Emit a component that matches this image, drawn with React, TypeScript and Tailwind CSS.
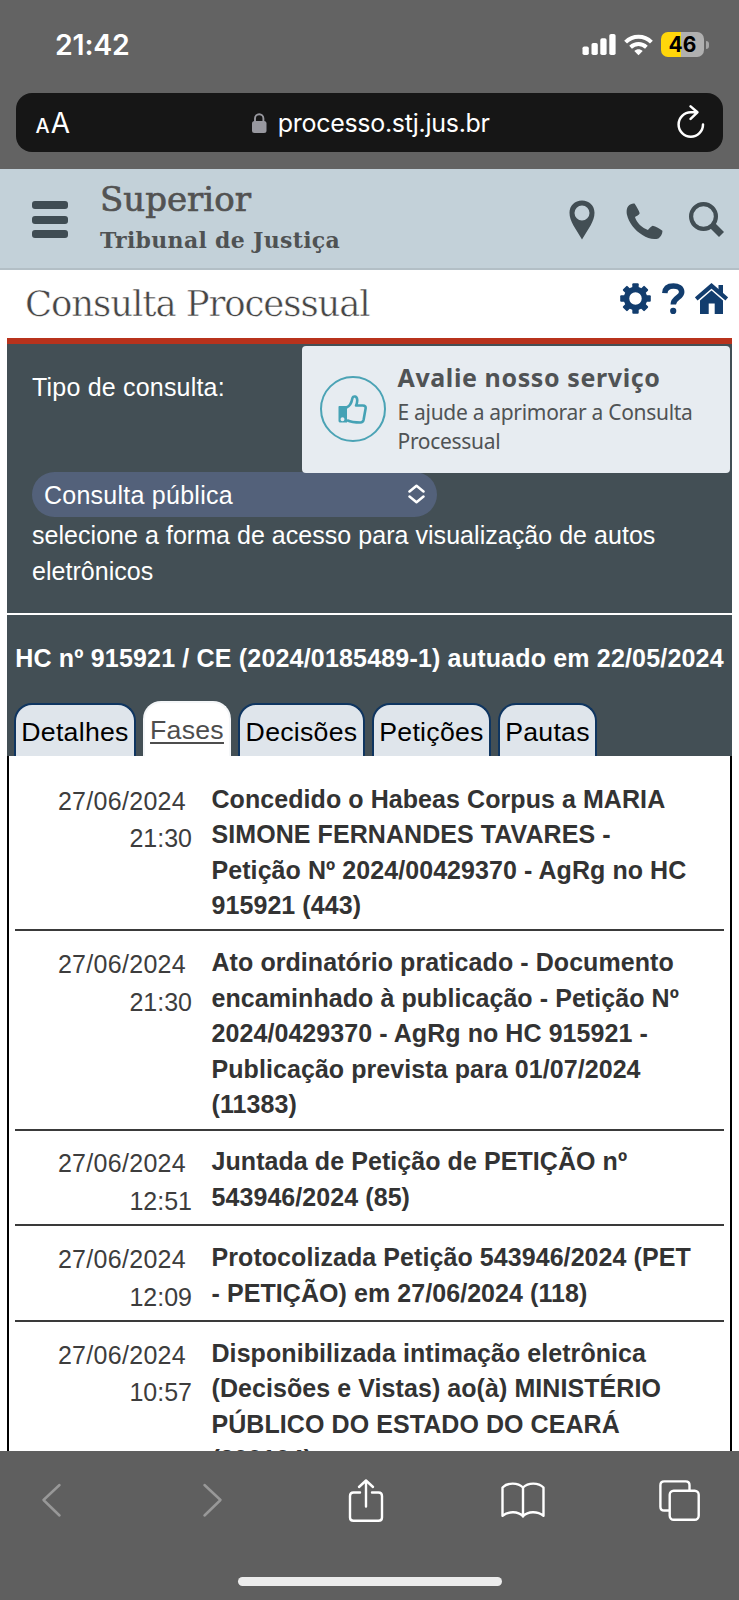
import clsx from "clsx";

interface Fase {
   date: string;
   time: string;
   lines: string[];
}

const tabs = [
   { label: "Detalhes", size: "w-[122px]" },
   { label: "Fases", size: "w-[88px]", active: true },
   { label: "Decisões", size: "w-[127px]" },
   { label: "Petições", size: "w-[119px]" },
   { label: "Pautas", size: "w-[99px]" },
];

const fases: Fase[] = [
   {
      date: "27/06/2024",
      time: "21:30",
      lines: [
         "Concedido o Habeas Corpus a MARIA",
         "SIMONE FERNANDES TAVARES -",
         "Petição Nº 2024/00429370 - AgRg no HC",
         "915921 (443)",
      ],
   },
   {
      date: "27/06/2024",
      time: "21:30",
      lines: [
         "Ato ordinatório praticado - Documento",
         "encaminhado à publicação - Petição Nº",
         "2024/0429370 - AgRg no HC 915921 -",
         "Publicação prevista para 01/07/2024",
         "(11383)",
      ],
   },
   {
      date: "27/06/2024",
      time: "12:51",
      lines: ["Juntada de Petição de PETIÇÃO nº", "543946/2024 (85)"],
   },
   {
      date: "27/06/2024",
      time: "12:09",
      lines: [
         "Protocolizada Petição 543946/2024 (PET",
         "- PETIÇÃO) em 27/06/2024 (118)",
      ],
   },
   {
      date: "27/06/2024",
      time: "10:57",
      lines: [
         "Disponibilizada intimação eletrônica",
         "(Decisões e Vistas) ao(à) MINISTÉRIO",
         "PÚBLICO DO ESTADO DO CEARÁ",
         "(300104)",
      ],
   },
];

const StatusBar = () => (
   <div className="flex h-[93px] items-start justify-between pl-[55px] pr-[30px] pt-[29px]">
      <span className="text-[28.5px] font-semibold leading-[32px] tracking-[-0.2px]">
         21:42
      </span>
      <div className="flex items-center pt-[3px]">
         <svg width="34" height="21" viewBox="0 0 34 21" fill="white">
            <rect x="0.5" y="12.5" width="6.3" height="8.5" rx="1.8" />
            <rect x="9.5" y="9" width="6.3" height="12" rx="1.8" />
            <rect x="18.3" y="4.3" width="6.3" height="16.7" rx="1.8" />
            <rect x="27.3" y="0" width="6.3" height="21" rx="1.8" />
         </svg>
         <svg
            className="ml-[8px]"
            width="29"
            height="22"
            viewBox="0 0 29 22"
            fill="none"
            stroke="white"
            strokeWidth="4"
         >
            <path d="M1.6 8.2C8.8 1 20.2 1 27.4 8.2" />
            <path d="M6.6 13.2c4.6-4.2 11.2-4.2 15.8 0" />
            <path
               d="M10.3 17c2.6-2.2 5.8-2.2 8.4 0l-4.2 4.3z"
               fill="white"
               stroke="none"
            />
         </svg>
         <div className="ml-[8px] flex h-[25px] w-[43px] items-center justify-center rounded-[7px] bg-[linear-gradient(90deg,#ffd60a_46%,#b0b0b0_46%)]">
            <span className="text-[21px] font-bold leading-none text-black">
               46
            </span>
         </div>
         <span className="ml-[2px] h-[8px] w-[3px] rounded-r-full bg-[#a5a5a5]" />
      </div>
   </div>
);

const AddressBar = () => (
   <div className="mx-[16px] flex h-[59px] items-center justify-between rounded-[16px] bg-[#161616] pl-[19.5px] pr-[17px]">
      <div className="flex w-[60px] items-baseline pt-[1px] leading-none">
         <span className="text-[20px] font-medium">A</span>
         <span className="ml-[1px] text-[28px]">A</span>
      </div>
      <div className="flex items-center">
         <svg width="15" height="20" viewBox="0 0 15 20">
            <rect y="8" width="14.5" height="12" rx="2.5" fill="#98989f" />
            <path
               d="M3 9V5.5a4.2 4.2 0 0 1 8.4 0V9"
               fill="none"
               stroke="#98989f"
               strokeWidth="1.9"
            />
         </svg>
         <span className="ml-[11px] text-[25px] leading-[30px] tracking-[-0.3px]">
            processo.stj.jus.br
         </span>
      </div>
      <div className="flex w-[60px] justify-end pb-[2px]">
         <svg
            width="30"
            height="34"
            viewBox="0 0 30 34"
            fill="none"
            stroke="white"
            strokeWidth="2.5"
            strokeLinecap="round"
            strokeLinejoin="round"
         >
            <path d="M27 19.5A12.2 12.2 0 1 1 14.8 7.3h6.4M14.6 1.4l6.8 5.9-6.8 6.6" />
         </svg>
      </div>
   </div>
);

const SiteHeader = () => (
   <header className="flex h-[101px] items-start border-b-2 border-[#b3bfc6] bg-[#c3d1d9] pl-[32px] text-[#4a5358]">
      <div className="mt-[32px] flex w-[36px] flex-col gap-[6.5px]">
         <span className="h-[8px] rounded-[3px] bg-[#3f4c53]" />
         <span className="h-[8px] rounded-[3px] bg-[#3f4c53]" />
         <span className="h-[8px] rounded-[3px] bg-[#3f4c53]" />
      </div>
      <div className="ml-[32px] w-[300px] whitespace-nowrap font-['DejaVu_Serif',serif]">
         <p className="mt-[10px] text-[34px] leading-[40px] text-[#525252] [-webkit-text-stroke:0.7px_#525252]">
            Superior
         </p>
         <p className="mt-[5px] text-[22px] font-bold leading-[32px] tracking-[0.3px] text-[#4f5253]">
            Tribunal de Justiça
         </p>
      </div>
      <svg
         className="ml-[169px] mt-[31px]"
         width="26"
         height="40"
         viewBox="0 0 26 40"
         fill="#424e54"
      >
         <path
            fillRule="evenodd"
            d="M13 .5C5.8.5.5 5.6.5 12.7c0 4.3 1.5 8 3.8 12.5L13 39.5l8.7-14.3c2.3-4.5 3.8-8.2 3.8-12.5C25.5 5.6 20.2.5 13 .5zm0 5a7.5 7.5 0 1 1 0 15 7.5 7.5 0 0 1 0-15z"
         />
      </svg>
      <svg
         className="ml-[31px] mt-[34px]"
         width="38"
         height="37"
         viewBox="0 0 38 37"
         fill="#424e54"
      >
         <path d="M2 3.5C4 1 6.5.3 8.5.6c1.8 2.6 4.6 7.2 5.2 9.7-.6 1.5-3.3 3.1-4.7 3.8 1.2 5.5 7.5 11.3 12.9 12.8 1.4-1.2 3.1-3.7 4.8-4.2 3 .8 7.3 3.1 9.7 5.1.3 2.5-1.5 6.3-4 7.6-5.1 1.8-10.7-.2-16-3.5C8.5 27.2 2.8 19.7.9 11.5.3 8.4.7 5.3 2 3.5z" />
      </svg>
      <svg
         className="ml-[24px] mt-[33px]"
         width="38"
         height="37"
         viewBox="0 0 38 37"
         fill="none"
         stroke="#424e54"
      >
         <circle cx="15.5" cy="14.5" r="12.4" strokeWidth="4.2" />
         <path d="M23.5 22.5l10 10" strokeWidth="7" />
      </svg>
   </header>
);

const TitleBar = () => (
   <div className="flex h-[68px] items-start justify-between bg-white pl-[25px] pr-[11px] text-[#123d6e]">
      <h1 className="mt-[11px] whitespace-nowrap font-['DejaVu_Serif',serif] text-[35.5px] leading-[46px] tracking-[-1.1px] text-[#464646] [-webkit-text-stroke:0.5px_white]">
         Consulta Processual
      </h1>
      <div className="mt-[12.5px] flex">
         <svg width="31" height="31" viewBox="-15.5 -15.5 31 31">
            <circle r="9" fill="none" stroke="currentColor" strokeWidth="5.5" />
            {[0, 45, 90, 135, 180, 225, 270, 315].map((angle) => (
               <rect
                  key={angle}
                  x="-3.2"
                  y="-15.3"
                  width="6.4"
                  height="6"
                  rx="1"
                  fill="currentColor"
                  transform={`rotate(${angle})`}
               />
            ))}
         </svg>
         <svg
            className="ml-[11px]"
            width="23"
            height="31"
            viewBox="0 0 23 31"
            fill="none"
            stroke="currentColor"
            strokeWidth="5.5"
         >
            <path d="M2.8 10.2C3 5 6.3 2.9 11.5 2.9c4.7 0 8.2 2.1 8.2 6.2 0 5.7-8.4 5.4-8.4 12.4" />
            <circle cx="11.2" cy="27.9" r="3.1" fill="currentColor" stroke="none" />
         </svg>
         <svg className="ml-[10px]" width="33" height="31" viewBox="0 0 33 31">
            <path
               d="M1.2 16L16.5 2.8 31.8 16"
               fill="none"
               stroke="currentColor"
               strokeWidth="4.2"
            />
            <path
               d="M23.5 2H28v9l-4.5-4zM16.5 7.5L28 17.5V31h-8.3V20.500h-6V31H5V17.5z"
               fill="currentColor"
            />
         </svg>
      </div>
   </div>
);

const RatingCard = () => (
   <div className="absolute right-[2px] top-[1.5px] flex h-[127.5px] w-[428px] rounded-[4px] bg-[#e7ecf1] pl-[17.5px] font-['Noto_Sans',sans-serif] text-[#505355]">
      <div className="mt-[30.5px] flex h-[66px] w-[66px] shrink-0 items-center justify-center rounded-full border-2 border-[#4ba3b5]">
         <svg
            width="29"
            height="29"
            viewBox="0 0 29 29"
            fill="none"
            stroke="#45a2b5"
            strokeWidth="2.6"
            strokeLinejoin="round"
         >
            <path d="M8.5 12.5c3.5-1.5 5-4.5 5.7-8.5.4-2.2 1.5-2.8 2.9-2.5 2.7.7 2.6 5.3 1 9h6.8c2.2 0 3 1.2 2.7 3l-2 11.2c-.4 1.900-1.300 2.800-3.200 2.800-5.500 0-9-.3-13.400-2.300" />
            <path
               fillRule="evenodd"
               stroke="none"
               fill="#45a2b5"
               d="M1.5 11H9v16.5H2.5c-1.3 0-2-.5-2-2V12c0-.6.4-1 1-1zm3 11.3a2 2 0 1 0 0 4 2 2 0 0 0 0-4z"
            />
         </svg>
      </div>
      <div className="ml-[12px] mt-[13px] whitespace-nowrap">
         <p className="text-[25px] font-bold leading-[37px] tracking-[0.6px]">
            Avalie nosso serviço
         </p>
         <p className="pt-[2px] text-[21px] leading-[29px] tracking-[-0.3px]">
            E ajude a aprimorar a Consulta
            <br />
            Processual
         </p>
      </div>
   </div>
);

const SearchPanel = () => (
   <section className="relative h-[269px] whitespace-nowrap bg-[#434f55] pl-[25px] pt-[24.5px] text-[25px] leading-[36px] text-white">
      <p className="tracking-[0.2px]">Tipo de consulta:</p>
      <div className="mt-[67.5px] flex h-[44.5px] w-[405px] items-center justify-between rounded-full bg-[#53617a] pl-[12px] pr-[12px]">
         <span className="pt-[1px] tracking-[0.25px]">Consulta pública</span>
         <svg
            width="17"
            height="20"
            viewBox="0 0 17 20"
            fill="none"
            stroke="white"
            strokeWidth="2.5"
            strokeLinecap="round"
            strokeLinejoin="round"
         >
            <path d="M1.5 7.5l7-5.7 7 5.7M1.5 12.5l7 5.7 7-5.7" />
         </svg>
      </div>
      <p className="mt-[1.5px] leading-[35.6px] tracking-[0.04px]">
         selecione a forma de acesso para visualização de autos
         <br />
         eletrônicos
      </p>
      <RatingCard />
   </section>
);

const Tabs = () => (
   <nav className="flex items-end gap-[7px] pl-[7px]">
      {tabs.map(({ label, size, active }) => (
         <div
            key={label}
            className={clsx(
               "flex justify-center whitespace-nowrap rounded-t-[18px] border-x-2 border-t-2 pt-[12px] text-[26.7px] leading-[30px] tracking-[0.25px]",
               size,
               active
                  ? "h-[55px] border-[#f4f6f8] bg-white text-[#4d4d4d] underline decoration-2 underline-offset-[3px]"
                  : "h-[53px] border-[#0f3560] bg-[#dfe5eb] text-black",
            )}
         >
            {label}
         </div>
      ))}
   </nav>
);

const FaseRow: React.FC<Fase> = ({ date, time, lines }) => (
   <li className="flex border-b-2 border-[#3a3a3a] pb-[4px] pt-[13.6px]">
      <div className="w-[177px] shrink-0 pt-[1.2px] text-right leading-[37.5px] text-[#3d3d3d]">
         <p className="pr-[6px] tracking-[0.3px]">{date}</p>
         <p>{time}</p>
      </div>
      <div className="ml-[19.5px] whitespace-nowrap pb-[1.5px] font-bold leading-[35.6px] tracking-[0.07px] text-[#333]">
         {lines.map((line) => (
            <p key={line}>{line}</p>
         ))}
      </div>
   </li>
);

const Toolbar = () => (
   <footer className="h-[149px] shrink-0 bg-[#5f5f5f]">
      <div className="flex h-[98px] items-center pl-[40px]">
         <svg width="22" height="36" viewBox="0 0 22 36" fill="none" stroke="#989898" strokeWidth="2.5" strokeLinecap="round" strokeLinejoin="round">
            <path d="M19.5 3l-16 15 16 15.5" />
         </svg>
         <svg className="ml-[139px]" width="22" height="36" viewBox="0 0 22 36" fill="none" stroke="#989898" strokeWidth="2.5" strokeLinecap="round" strokeLinejoin="round">
            <path d="M3.5 3l16 15-16 15.5" />
         </svg>
         <svg className="ml-[125px]" width="36" height="44" viewBox="0 0 36 44" fill="none" stroke="white" strokeWidth="2.4" strokeLinecap="round" strokeLinejoin="round">
            <path d="M12 14.5H5.5C3.500 14.500 2 15.700 2 18v21.500C2 42 3.500 42.800 5.500 42.800h25c2 0 3.500-.8 3.500-3.300V18c0-2.300-1.500-3.500-3.500-3.500H24" />
            <path d="M18 28.5v-26M11 9l7-6.5L25 9" />
         </svg>
         <svg className="ml-[117px]" width="44" height="36" viewBox="0 0 44 36" fill="none" stroke="white" strokeWidth="2.4" strokeLinecap="round" strokeLinejoin="round">
            <path d="M22 5.5v29M22 5.500C17 .3 6.500.3 1.500 5.500v28.300C7.500 29 17 29 22 34.300 27 29 36.500 29 42.500 33.800V5.500C37.500.3 27 .3 22 5.500z" />
         </svg>
         <svg className="ml-[114px]" width="41" height="41" viewBox="0 0 41 41" fill="none" stroke="white" strokeWidth="2.4" strokeLinejoin="round">
            <rect x="10.7" y="10.7" width="29" height="29" rx="4" />
            <path d="M10.7 30.500H5.200c-2.400 0-3.800-1.400-3.800-3.800V5.200c0-2.400 1.400-3.800 3.800-3.800h21.500c2.400 0 3.800 1.400 3.800 3.800v5.500" />
         </svg>
      </div>
      <div className="mx-auto mt-[28px] h-[9px] w-[264px] rounded-full bg-[#ececec]" />
   </footer>
);

export default function App() {
   return (
      <div className="flex h-[1600px] w-[739px] flex-col overflow-hidden bg-white font-['Liberation_Sans',Arial,sans-serif]">
         <div className="h-[169px] shrink-0 bg-[#636363] font-['Inter',sans-serif] text-white">
            <StatusBar />
            <AddressBar />
         </div>
         <SiteHeader />
         <TitleBar />
         <main className="mx-[7px] min-h-0 flex-1 overflow-hidden">
            <div className="h-[6px] bg-[#b8321c]" />
            <SearchPanel />
            <section className="mt-[2px] flex h-[141px] flex-col justify-between bg-[#434f55] pt-[25px]">
               <h2 className="whitespace-nowrap text-center text-[25px] font-bold leading-[36px] tracking-[0.18px] text-white">
                  HC nº 915921 / CE (2024/0185489-1) autuado em 22/05/2024
               </h2>
               <Tabs />
            </section>
            <ul className="border-x-2 border-black px-[6px] pt-[12px] text-[25px]">
               {fases.map((fase, index) => (
                  <FaseRow key={index} {...fase} />
               ))}
            </ul>
         </main>
         <Toolbar />
      </div>
   );
}
